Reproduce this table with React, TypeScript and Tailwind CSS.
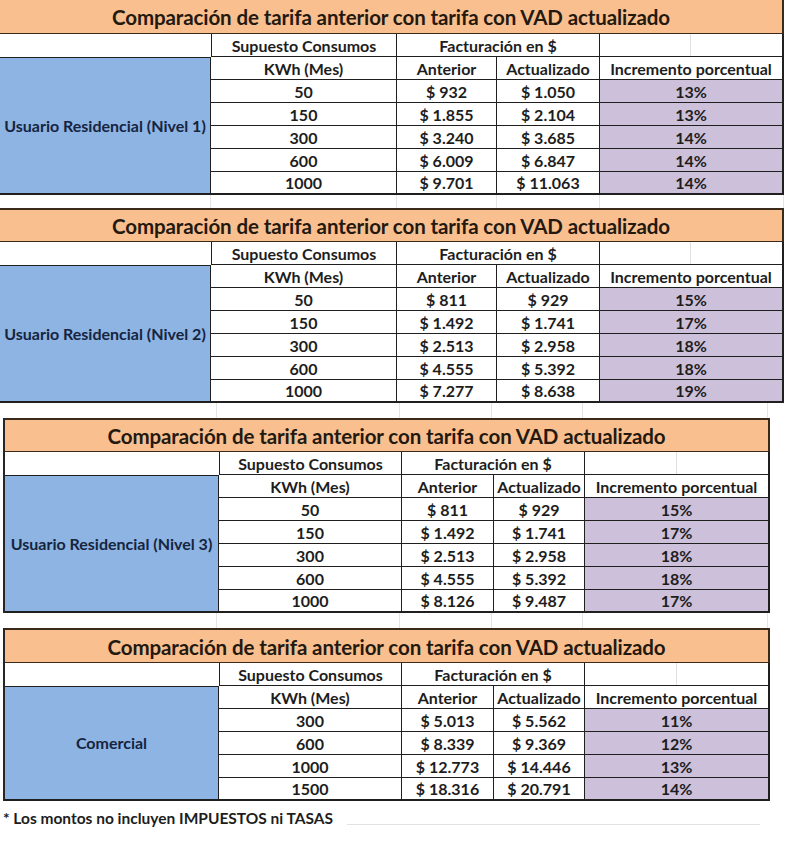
import React from 'react'

type Row = { kwh: string; anterior: string; actualizado: string; pct: string }

type TableData = {
  label: string
  rows: Row[]
  narrow?: boolean
  topBorder?: boolean
}

const TITLE = 'Comparación de tarifa anterior con tarifa con VAD actualizado'

const TABLES: TableData[] = [
  {
    label: 'Usuario Residencial (Nivel 1)',
    rows: [
      { kwh: '50', anterior: '$ 932', actualizado: '$ 1.050', pct: '13%' },
      { kwh: '150', anterior: '$ 1.855', actualizado: '$ 2.104', pct: '13%' },
      { kwh: '300', anterior: '$ 3.240', actualizado: '$ 3.685', pct: '14%' },
      { kwh: '600', anterior: '$ 6.009', actualizado: '$ 6.847', pct: '14%' },
      { kwh: '1000', anterior: '$ 9.701', actualizado: '$ 11.063', pct: '14%' },
    ],
  },
  {
    label: 'Usuario Residencial (Nivel 2)',
    topBorder: true,
    rows: [
      { kwh: '50', anterior: '$ 811', actualizado: '$ 929', pct: '15%' },
      { kwh: '150', anterior: '$ 1.492', actualizado: '$ 1.741', pct: '17%' },
      { kwh: '300', anterior: '$ 2.513', actualizado: '$ 2.958', pct: '18%' },
      { kwh: '600', anterior: '$ 4.555', actualizado: '$ 5.392', pct: '18%' },
      { kwh: '1000', anterior: '$ 7.277', actualizado: '$ 8.638', pct: '19%' },
    ],
  },
  {
    label: 'Usuario Residencial (Nivel 3)',
    narrow: true,
    topBorder: true,
    rows: [
      { kwh: '50', anterior: '$ 811', actualizado: '$ 929', pct: '15%' },
      { kwh: '150', anterior: '$ 1.492', actualizado: '$ 1.741', pct: '17%' },
      { kwh: '300', anterior: '$ 2.513', actualizado: '$ 2.958', pct: '18%' },
      { kwh: '600', anterior: '$ 4.555', actualizado: '$ 5.392', pct: '18%' },
      { kwh: '1000', anterior: '$ 8.126', actualizado: '$ 9.487', pct: '17%' },
    ],
  },
  {
    label: 'Comercial',
    narrow: true,
    topBorder: true,
    rows: [
      { kwh: '300', anterior: '$ 5.013', actualizado: '$ 5.562', pct: '11%' },
      { kwh: '600', anterior: '$ 8.339', actualizado: '$ 9.369', pct: '12%' },
      { kwh: '1000', anterior: '$ 12.773', actualizado: '$ 14.446', pct: '13%' },
      { kwh: '1500', anterior: '$ 18.316', actualizado: '$ 20.791', pct: '14%' },
    ],
  },
]

const WIDE_COLS = 'grid-cols-[211px_186px_100px_103px_184px]'
const NARROW_COLS = 'grid-cols-[214px_183px_92px_91px_185px]'

const cell = 'flex items-center justify-center border-b border-r border-[#1f1f1f] pt-px whitespace-nowrap'

function Gridlines({ narrow, height }: { narrow?: boolean; height: string }) {
  return (
    <div className={`grid ${narrow ? NARROW_COLS : WIDE_COLS} ${height} ${narrow ? 'ml-[3px]' : ''}`}>
      {[0, 1, 2, 3, 4].map((i) => (
        <div key={i} className="border-r border-[#e4e4e4]" />
      ))}
    </div>
  )
}

function TarifaTable({ data }: { data: TableData }) {
  const { label, rows, narrow, topBorder } = data
  const last = rows.length - 1

  return (
    <div
      className={`grid ${narrow ? NARROW_COLS : WIDE_COLS} ${
        rows.length === 5
          ? 'grid-rows-[34px_repeat(7,23px)]'
          : 'grid-rows-[35px_repeat(6,23px)]'
      } ${narrow ? 'ml-[3px] border-l-2 border-[#262626]' : ''}`}
    >
      <div
        className={`col-span-5 flex items-center justify-center border-b border-r-2 border-[#3a2a1a] bg-[#f9bf8f] pt-[2px] text-[20.5px] font-bold tracking-[-0.1px] text-[#24190f] ${
          topBorder ? 'border-t-2' : ''
        }`}
      >
        {TITLE}
      </div>

      {/* header row 1 */}
      <div className="bg-white" />
      <div className={`${cell} border-l`}>Supuesto Consumos</div>
      <div className={`${cell} col-span-2`}>Facturación en $</div>
      <div className="grid grid-cols-2 border-b border-r-2 border-[#1f1f1f]">
        <div className="border-r border-[#e0e0e0]" />
        <div />
      </div>

      {/* label cell */}
      <div
        className={`flex items-center justify-center whitespace-nowrap border-y border-r border-[#1f1f1f] bg-[#8db4e2] text-[#16243f] ${
          rows.length === 5 ? 'row-span-6' : 'row-span-5'
        } border-b-2`}
      >
        {label}
      </div>

      {/* header row 2 */}
      <div className={cell}>KWh (Mes)</div>
      <div className={cell}>Anterior</div>
      <div className={cell}>Actualizado</div>
      <div className={`${cell} border-r-2`}>Incremento porcentual</div>

      {rows.map((r, i) => {
        const b = i === last ? 'border-b-2' : ''
        return (
          <React.Fragment key={r.kwh}>
            <div className={`${cell} ${b}`}>{r.kwh}</div>
            <div className={`${cell} ${b}`}>{r.anterior}</div>
            <div className={`${cell} ${b}`}>{r.actualizado}</div>
            <div className={`${cell} ${b} border-r-2 bg-[#ccc0da]`}>{r.pct}</div>
          </React.Fragment>
        )
      })}
    </div>
  )
}

export default function App() {
  return (
    <div className="h-[855px] w-[790px] overflow-hidden bg-white font-['Lato','Liberation_Sans',sans-serif] text-[16px] font-bold leading-none text-[#1d1d1d]">
      <TarifaTable data={TABLES[0]} />
      <Gridlines height="h-[13px]" />
      <TarifaTable data={TABLES[1]} />
      <Gridlines height="h-[15px]" narrow />
      <TarifaTable data={TABLES[2]} />
      <Gridlines height="h-[15px]" narrow />
      <TarifaTable data={TABLES[3]} />

      <div className="flex h-[36px] items-center">
        <p className="pl-[3px] text-[15.5px] text-[#1d1d1d]">* Los montos no incluyen IMPUESTOS ni TASAS</p>
        <div className="ml-[14px] mt-[10px] h-px w-[413px] bg-[#e2e2e2]" />
      </div>
    </div>
  )
}
